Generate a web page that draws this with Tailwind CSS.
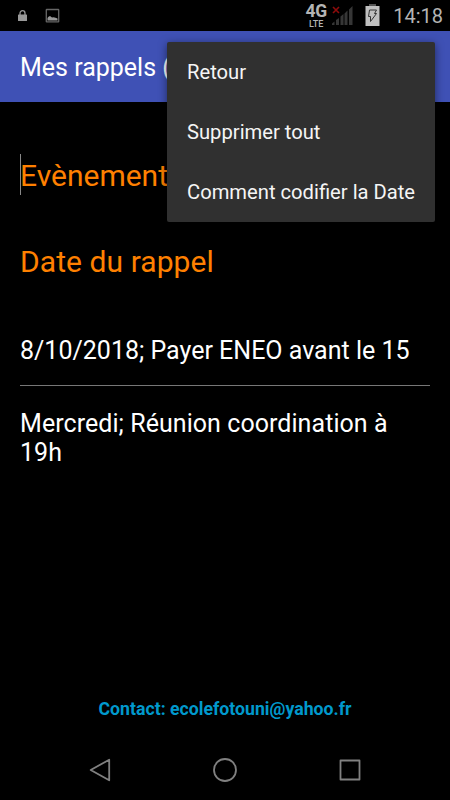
<!DOCTYPE html>
<html lang="fr">
<head>
  <meta charset="UTF-8" />
  <meta name="viewport" content="width=device-width, initial-scale=1.0"/>
  <title>Mes rappels</title>
  <script src="https://cdn.jsdelivr.net/npm/@tailwindcss/browser@4"></script>
</head>
<body class="bg-black text-white font-[Roboto,sans-serif]">
  <div class="relative flex flex-col w-[450px] h-[800px] overflow-hidden">

    <!-- Barre d'état -->
    <div class="flex items-center h-[31px] shrink-0 pl-[17px] pr-[7px] text-[#b4b4b4]">
      <svg class="w-[11px] h-[12px]" viewBox="0 0 11 12">
        <path d="M3 5V3.2a2.5 2.5 0 0 1 5 0V5" fill="none" stroke="#999" stroke-width="1.3"/>
        <rect x="1" y="4.5" width="9" height="6.5" rx=".6" fill="#999"/>
      </svg>
      <svg class="ml-[17px] w-[15px] h-[15px]" viewBox="0 0 15 15">
        <rect x="1.3" y="1.5" width="12.4" height="12.4" rx=".5" fill="none" stroke="#666" stroke-width="1.3"/>
        <path d="M2.5 12.5V10l1-1.2 1.5-.8 2 1.500 1.500-.3 2 .5 2 .8v2z" fill="#999"/>
      </svg>
      <div class="ml-auto flex flex-col items-center w-[22px]">
        <span class="text-[17.5px] leading-[17px] font-bold tracking-[-0.4px]">4G</span>
        <span class="text-[9px] leading-[9px] font-medium">LTE</span>
      </div>
      <svg class="ml-[5px] w-[23px] h-[22px]" viewBox="0 0 23 22">
        <path d="M1 2l6 6M7 2l-6 6" stroke="#8e0b0b" stroke-width="1.6"/>
        <path d="M0 20v-1.5l2.5-2V20zM4 20v-5l3-2v7zM8.500 20v-8.500l3-2.500v11zM12.500 20V8.500l3-3V20zM17 20V4.500L20.500 1v19z" fill="#363636"/>
      </svg>
      <svg class="ml-[10px] w-[15px] h-[23px]" viewBox="0 0 15 23">
        <rect x="4" y="0" width="7" height="2.5" fill="#555"/>
        <rect x=".5" y="2" width="14" height="20" fill="#c0c0c0"/>
        <path d="M4.500 6H11.500L9.500 9.500H11.500L5.500 17.500V12.500H3.500z" fill="none" stroke="#333" stroke-width="1"/>
      </svg>
      <span class="ml-[13px] text-[20px] leading-[20px] pt-px">14:18</span>
    </div>

    <!-- Barre d'application -->
    <header class="flex items-center h-[71px] shrink-0 px-5 pt-[2px] bg-[#3f51b5]">
      <h1 class="text-[25px] leading-none whitespace-nowrap">Mes rappels (2)</h1>
    </header>

    <main class="flex flex-col grow px-5">
      <div class="flex items-center h-[43px] mt-[51px] text-[30px] text-[#ff8000]">
        <span class="w-px h-[41px] -mr-px bg-[#888]"></span>
        <span class="pt-px">Evènement</span>
      </div>
      <div class="flex items-center h-[43px] mt-[43px] pt-px text-[30px] tracking-[0.07px] text-[#ff8000]">Date du rappel</div>

      <ul class="mt-[43px] text-[25px] leading-[29px]">
        <li class="flex items-center h-[61px] pb-[10px] border-b border-[#777] whitespace-nowrap">8/10/2018; Payer ENEO avant le 15</li>
        <li class="pt-[23px] tracking-[0.06px]">Mercredi; Réunion coordination à<br>19h</li>
      </ul>

      <p class="mt-auto mb-[20px] text-center text-[17.7px] leading-[22px] font-bold text-[#0099cc]">Contact: ecolefotouni@yahoo.fr</p>
    </main>

    <!-- Barre de navigation -->
    <nav class="flex items-center justify-between h-[60px] shrink-0 px-[88px]">
      <svg class="w-[24px] h-[24px]" viewBox="0 0 24 24" fill="none" stroke="#808080" stroke-width="1.8" stroke-linejoin="round">
        <path d="M2.700 12L21.200 1.700v20.600z"/>
      </svg>
      <svg class="w-[24px] h-[24px]" viewBox="0 0 24 24" fill="none" stroke="#808080" stroke-width="1.8">
        <circle cx="12" cy="12" r="11"/>
      </svg>
      <svg class="w-[24px] h-[24px]" viewBox="0 0 24 24" fill="none" stroke="#808080" stroke-width="1.8" stroke-linejoin="round">
        <rect x="2.5" y="2.5" width="19" height="19"/>
      </svg>
    </nav>

    <!-- Menu déroulant -->
    <div class="absolute top-[42px] left-[167px] w-[268px] h-[180px] rounded-[2px] bg-[#303030] shadow-[0_2px_8px_rgba(0,0,0,0.5)] text-[20.2px] text-[#f5f5f5]">
      <div class="flex items-center h-[60px] px-5 whitespace-nowrap">Retour</div>
      <div class="flex items-center h-[60px] px-5 whitespace-nowrap">Supprimer tout</div>
      <div class="flex items-center h-[60px] px-5 whitespace-nowrap">Comment codifier la Date</div>
    </div>
  </div>
</body>
</html>
